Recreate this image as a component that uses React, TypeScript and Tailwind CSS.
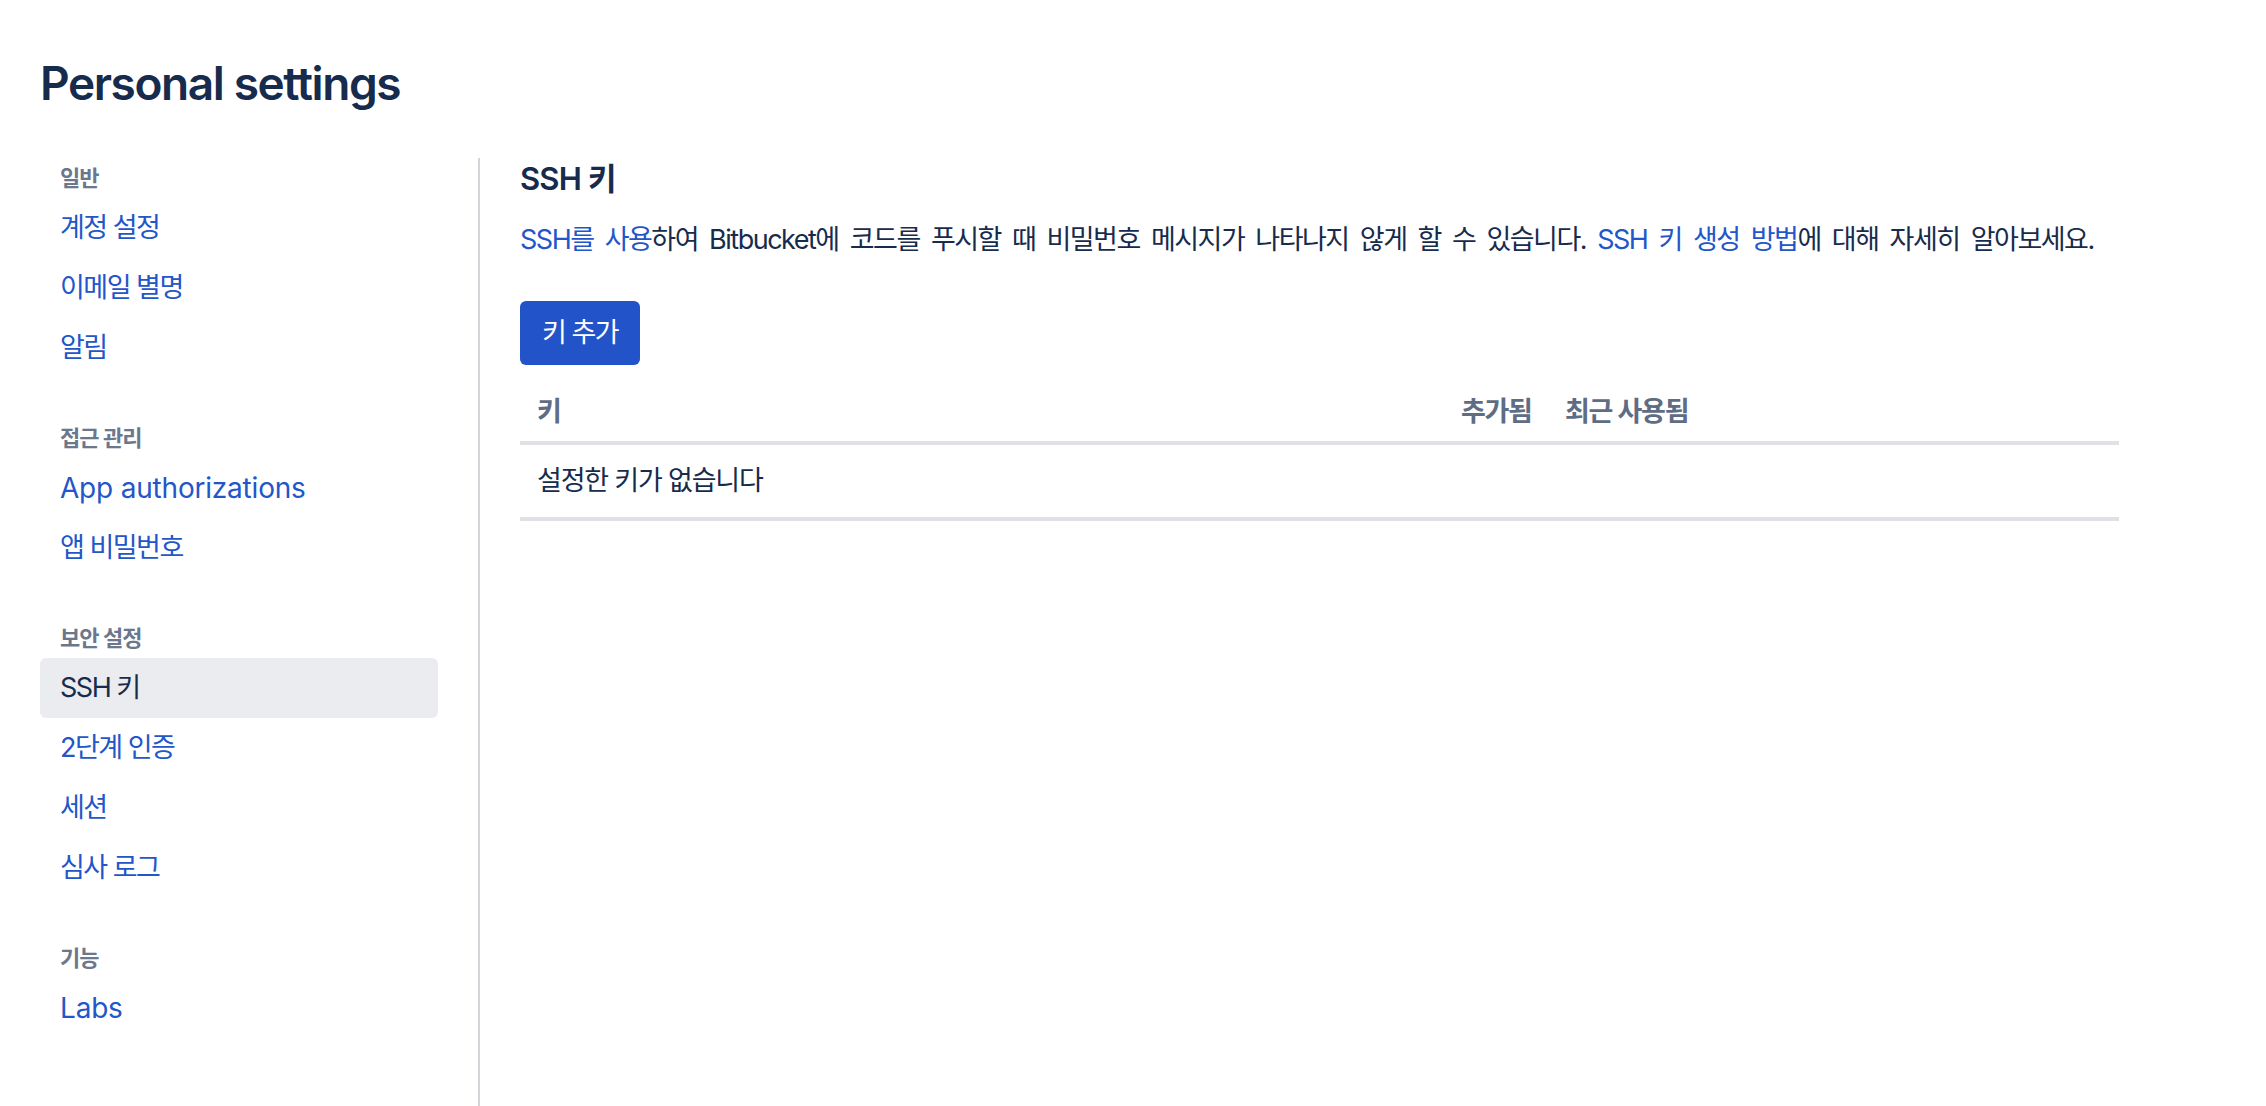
import React from 'react';

type NavItem = { label: string; active?: boolean; latin?: boolean };
type NavGroup = { title: string; items: NavItem[] };

const groups: NavGroup[] = [
  { title: '일반', items: [{ label: '계정 설정' }, { label: '이메일 별명' }, { label: '알림' }] },
  { title: '접근 관리', items: [{ label: 'App authorizations', latin: true }, { label: '앱 비밀번호' }] },
  {
    title: '보안 설정',
    items: [{ label: 'SSH 키', active: true }, { label: '2단계 인증' }, { label: '세션' }, { label: '심사 로그' }],
  },
  { title: '기능', items: [{ label: 'Labs', latin: true }] },
];

const Sidebar: React.FC = () => {
  return (
    <nav className="w-[440px] shrink-0 pr-[40px] border-r-2 border-[#d3d5da]">
      {groups.map((group, gi) => (
        <div key={group.title} className={gi > 0 ? 'mt-[40px]' : ''}>
          <div className="h-[40px] flex items-center pl-[20px] text-[22px] font-semibold text-[#6b778c] tracking-[-1px]">
            {group.title}
          </div>
          {group.items.map((item) => (
            <a
              key={item.label}
              href="#"
              className={`h-[60px] flex items-center px-[20px] rounded-[6px] ${
                item.latin ? 'text-[28px] tracking-[-0.2px]' : 'text-[27px] tracking-[-1.5px]'
              } ${item.active ? 'bg-[#ebecf0] text-[#172b4d]' : 'text-[#2256c9]'}`}
            >
              {item.label}
            </a>
          ))}
        </div>
      ))}
    </nav>
  );
};

const KeysTable: React.FC = () => {
  return (
    <div className="mt-[18px] w-[1599px]">
      {/* header */}
      <div className="grid grid-cols-[924px_104px_160px_1fr] h-[62px] border-b-4 border-[#dfe1e6] text-[27px] font-semibold text-[#5e6c84] tracking-[-1.3px]">
        <div className="px-[17px] flex items-center">키</div>
        <div className="px-[17px] flex items-center whitespace-nowrap">추가됨</div>
        <div className="px-[17px] flex items-center whitespace-nowrap">최근 사용됨</div>
        <div />
      </div>
      {/* empty row */}
      <div className="h-[76px] border-b-4 border-[#dfe1e6] px-[17px] flex items-center text-[27px] tracking-[-1.2px] text-[#172b4d]">
        설정한 키가 없습니다
      </div>
    </div>
  );
};

export default function App() {
  return (
    <div className="min-h-screen flex flex-col bg-white text-[#172b4d] font-['Inter','Noto_Sans_CJK_KR',sans-serif]">
      <h1 className="pl-[40px] pt-[59px] text-[46px] leading-[48px] font-semibold tracking-[-1.4px] text-[#172b4d]">
        Personal settings
      </h1>

      <div className="flex flex-1 mt-[51px] pl-[40px]">
        <Sidebar />

        <main className="pl-[40px]">
          <h2 className="h-[40px] leading-[42px] text-[31px] font-semibold tracking-[-0.8px]">SSH 키</h2>

          <p className="mt-[22px] leading-[40px] text-[27px] tracking-[-1.5px] [word-spacing:5px] whitespace-nowrap">
            <a href="#" className="text-[#2256c9]">
              SSH를 사용
            </a>
            하여 Bitbucket에 코드를 푸시할 때 비밀번호 메시지가 나타나지 않게 할 수 있습니다.{' '}
            <a href="#" className="text-[#2256c9]">
              SSH 키 생성 방법
            </a>
            에 대해 자세히 알아보세요.
          </p>

          <button
            type="button"
            className="mt-[41px] h-[64px] px-[22px] rounded-[6px] bg-[#2353c8] text-white text-[27px] tracking-[-1.5px]"
          >
            키 추가
          </button>

          <KeysTable />
        </main>
      </div>
    </div>
  );
}
